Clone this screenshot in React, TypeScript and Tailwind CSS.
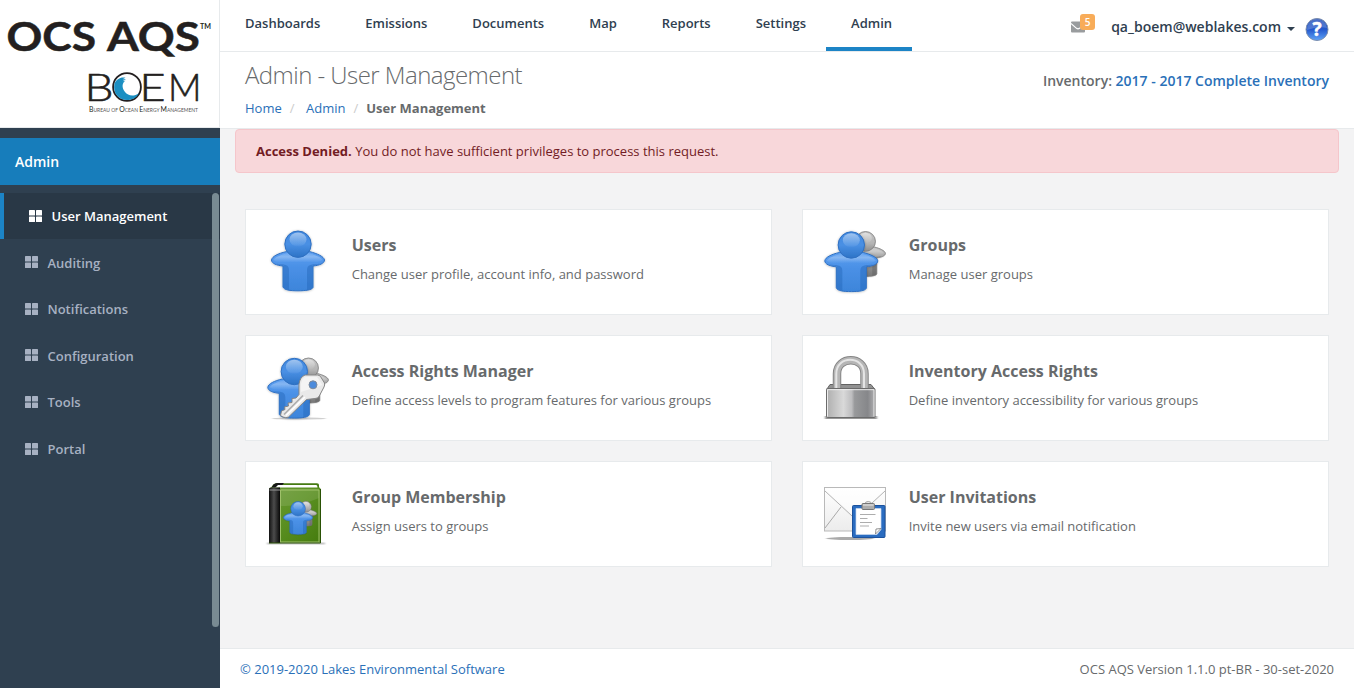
import React from "react";

const NAV = ["Dashboards", "Emissions", "Documents", "Map", "Reports", "Settings", "Admin"];
const SIDE = ["User Management", "Auditing", "Notifications", "Configuration", "Tools", "Portal"];

function Defs() {
  return (
    <svg width="0" height="0" className="absolute" aria-hidden="true">
      <defs>
        <linearGradient id="blueBody" x1="0" y1="0" x2="0" y2="1">
          <stop offset="0" stopColor="#5d9ff0" />
          <stop offset="0.4" stopColor="#4a90e6" />
          <stop offset="1" stopColor="#3d85da" />
        </linearGradient>
        <linearGradient id="shoulder" x1="0" y1="0" x2="0" y2="1">
          <stop offset="0" stopColor="#fff" stopOpacity="0.1" />
          <stop offset="0.4" stopColor="#fff" stopOpacity="0.28" />
          <stop offset="1" stopColor="#fff" stopOpacity="0" />
        </linearGradient>
        <linearGradient id="blueHead" x1="0" y1="0" x2="0" y2="1">
          <stop offset="0" stopColor="#4088df" />
          <stop offset="0.5" stopColor="#4a90e4" />
          <stop offset="1" stopColor="#2d73c6" />
        </linearGradient>
        <linearGradient id="headShine" x1="0" y1="0" x2="0" y2="1">
          <stop offset="0" stopColor="#fff" stopOpacity="0.5" />
          <stop offset="1" stopColor="#fff" stopOpacity="0.02" />
        </linearGradient>
        <linearGradient id="grayBody" x1="0" y1="0" x2="0" y2="1">
          <stop offset="0" stopColor="#c4c4c4" />
          <stop offset="0.4" stopColor="#a4a4a4" />
          <stop offset="1" stopColor="#767676" />
        </linearGradient>
        <linearGradient id="grayHead" x1="0" y1="0" x2="0" y2="1">
          <stop offset="0" stopColor="#c4c4c4" />
          <stop offset="0.6" stopColor="#b4b4b4" />
          <stop offset="1" stopColor="#8c8c8c" />
        </linearGradient>
        <linearGradient id="metal" x1="0" y1="0" x2="1" y2="0">
          <stop offset="0" stopColor="#aeaeae" />
          <stop offset="0.35" stopColor="#d9d9d9" />
          <stop offset="0.52" stopColor="#bdbdbf" />
          <stop offset="0.58" stopColor="#98999b" />
          <stop offset="0.85" stopColor="#86878a" />
          <stop offset="1" stopColor="#b0b0b2" />
        </linearGradient>
        <linearGradient id="greenCover" x1="0" y1="0" x2="1" y2="1">
          <stop offset="0" stopColor="#6a9a35" />
          <stop offset="0.45" stopColor="#5b9022" />
          <stop offset="1" stopColor="#457c0e" />
        </linearGradient>
        <linearGradient id="spine" x1="0" y1="0" x2="1" y2="0">
          <stop offset="0" stopColor="#111" />
          <stop offset="0.45" stopColor="#4c4c4c" />
          <stop offset="1" stopColor="#080808" />
        </linearGradient>
        <linearGradient id="paper" x1="0" y1="0" x2="0" y2="1">
          <stop offset="0" stopColor="#fff" />
          <stop offset="1" stopColor="#ececec" />
        </linearGradient>
        <linearGradient id="help" x1="0" y1="0" x2="0" y2="1">
          <stop offset="0" stopColor="#1c49b4" />
          <stop offset="0.5" stopColor="#2459cd" />
          <stop offset="1" stopColor="#5fa4f8" />
        </linearGradient>
        <filter id="soft" x="-20%" y="-20%" width="140%" height="150%">
          <feDropShadow dx="0" dy="0.3" stdDeviation="1" floodColor="#000" floodOpacity="0.3" />
        </filter>
        <filter id="floor" x="-20%" y="-100%" width="140%" height="300%">
          <feGaussianBlur stdDeviation="1.3 0.7" />
        </filter>
      </defs>
    </svg>
  );
}

const TORSO =
  "M5.500 30 C6 26.500 12 23.500 20 21.700 H44 C51 23.500 58 26.500 58.500 30 C58.500 33.500 53 35.500 47 36 V57.500 C46 60 39.500 60.800 32 60.800 C24 60.800 18 60 17 57 V36 C11 35.500 5.500 33.500 5.500 30 Z";

function Person({ gray = false }: { gray?: boolean }) {
  const edge = gray ? "#7c7c7c" : "#2f70c2";
  return (
    <g filter="url(#soft)">
      <path d={TORSO} fill={gray ? "url(#grayBody)" : "url(#blueBody)"} stroke={edge} strokeWidth="1" />
      <path
        d="M10 33.500 C16 35 23 33 23 40 V60 C20 59 17.500 58.300 17.500 57 V35.500 C14 35 12 34.500 10 33.500 Z M54 33.500 C48 35 41 33 41 40 V60 C44 59.500 46.500 58.500 46.500 57.500 V35.500 C50 35.200 52 34.500 54 33.500 Z"
        fill={gray ? "#606060" : "#2465b8"}
        opacity="0.45"
      />
      <path d="M7.500 30 C9 27 16 24.500 22 23 H42 C48 24.500 55 27 56.500 30 C50 34 44 32 32 32 C20 32 13 34 7.500 30 Z" fill="url(#shoulder)" />
      <circle cx="32" cy="14.200" r="13.200" fill={gray ? "url(#grayHead)" : "url(#blueHead)"} stroke={edge} strokeWidth="1" />
      <ellipse cx="32" cy="9.500" rx="8.500" ry="7" fill="url(#headShine)" />
    </g>
  );
}

function UsersIcon() {
  return (
    <svg viewBox="0 0 64 64" width="64" height="64" overflow="visible">
      <Person />
    </svg>
  );
}

function Pair() {
  return (
    <>
      <g transform="translate(18.500 .8) scale(.75)"><Person gray /></g>
      <g transform="translate(-3.700 .8)"><Person /></g>
    </>
  );
}

function GroupsIcon() {
  return <svg viewBox="0 0 64 64" width="64" height="64" overflow="visible"><Pair /></svg>;
}

function KeyIcon() {
  return (
    <svg viewBox="0 0 64 64" width="64" height="64" overflow="visible">
      <ellipse cx="33" cy="62.500" rx="27" ry="1" fill="#777" opacity=".35" filter="url(#floor)" />
      <g transform="translate(0 .5)"><Pair /></g>
      <path
        d="M39 19 L51.500 19 Q53 19 54.500 20.500 L58.500 27 Q59 29 58 31 L53 40.500 Q51.500 42.500 49 42.500 L40.500 43.500 L22.500 61 Q20 62.500 17 61 L14.500 59.500 L15.500 55 L19 53.500 L18.500 51 L22.500 50 L22 47 L26 46.500 L26 42.500 L30 42 L33 38.500 L33 28 Q34 21 39 19 Z"
        fill="#e9e9e9"
        stroke="#858585"
        strokeWidth="1"
      />
      <path d="M39.500 21 L51 21 L56.500 29 L35 36 L35 28 Q36 22 39.500 21Z" fill="#fff" opacity=".5" />
      <path d="M18 58.500 L37 39.500" stroke="#aaa" strokeWidth="1.500" />
      <path d="M20 59.500 L39 41" stroke="#fff" strokeWidth="1.500" />
      <circle cx="47" cy="28.800" r="4" fill="#4c8bdc" stroke="#7f8b9b" />
    </svg>
  );
}

function LockIcon() {
  return (
    <svg viewBox="0 0 64 64" width="64" height="64" overflow="visible">
      <g transform="translate(-2 0)">
        <rect x="4" y="60" width="52" height="3" fill="#333" opacity=".5" filter="url(#floor)" />
        <path d="M6 33 L9 28.500 H50 L53.500 33 Z" fill="#929292" stroke="#626262" />
        <path d="M16 32.500 V17.700 C16 -.2 43.500 -.2 43.500 17.700 V32.500" fill="none" stroke="#858585" strokeWidth="8.500" />
        <path d="M16 32.500 V17.700 C16 -.2 43.500 -.2 43.500 17.700 V32.500" fill="none" stroke="#b5b5b5" strokeWidth="6.500" />
        <path d="M15.300 32.500 V17.700 C15.300 -.8 43 -.8 43 17.700 V32.500" fill="none" stroke="#e4e4e4" strokeWidth="2" />
        <rect x="5.500" y="32.500" width="48.500" height="29" rx="1" fill="url(#metal)" stroke="#6b6b6b" />
        <path d="M6.500 60.500 V33.700 H53 V60.500" fill="none" stroke="#f3f3f3" strokeWidth="1" opacity=".9" />
      </g>
    </svg>
  );
}

function BookIcon() {
  return (
    <svg viewBox="0 0 64 64" width="64" height="64" overflow="visible">
      <g transform="translate(-2 0)">
        <rect x="3" y="60.500" width="58" height="2" fill="#777" opacity=".4" filter="url(#floor)" />
        <path d="M7 6 Q9 1.200 13 1.200 H53 Q55 1.200 55 3 V8 H8 Z" fill="#467b13" />
        <path d="M7 7 Q9 1 13 1 H20 L14 8 Z" fill="#171717" />
        <path d="M11 6 L14 3 H52 Q53.500 3 53.500 6 Z" fill="#fff" />
        <path d="M5 7 Q5 5.500 7 5.500 H55.500 Q56.500 5.500 56.500 7 V60.500 H5 Z" fill="url(#greenCover)" />
        <path d="M17 7 H55 V16 Q34 25 17 24 Z" fill="#fff" opacity=".11" />
        <path d="M5 7 Q5 5.500 7 5.500 H16 V61 H5 Z" fill="url(#spine)" />
        <path d="M16.500 8 H55 V60 H16.500 Z" fill="none" stroke="#9fc16a" strokeWidth="1" />
        <path d="M5.500 8 H16" stroke="#999" strokeWidth="1" />
        <path d="M5 61 H56.500 V7" fill="none" stroke="#295104" strokeWidth="1" />
        <g transform="translate(18.500 18.500) scale(.55)"><Pair /></g>
      </g>
    </svg>
  );
}

function MailIcon() {
  return (
    <svg viewBox="0 0 64 64" width="64" height="64" overflow="visible">
      <g transform="translate(-2 -2)">
        <ellipse cx="29" cy="58.500" rx="24" ry="1.500" fill="#444" opacity=".45" filter="url(#floor)" />
        <rect x="3.500" y="7.500" width="61" height="43.500" fill="url(#paper)" stroke="#b9b9b9" />
        <path d="M4 48 L20 27 M64 48 L48 27" stroke="#a9a9a9" fill="none" />
        <path d="M4 11 L31 36 Q34 38 37 36 L64 11" stroke="#b3b3b3" fill="none" />
        <path d="M4.500 8.500 H63.500 V10 L37 34.500 Q34 37 31 34.500 L4.500 10Z" fill="#fff" opacity=".6" />
        <rect x="31.500" y="25.500" width="32.500" height="32" rx="1" fill="#2a6cc0" stroke="#1c529d" />
        <path d="M35 28.500 H60 V49.500 L56 54.500 H35 Z" fill="#fff" stroke="#c9d9ee" strokeWidth=".7" />
        <path d="M54.500 54 L55 49 L60 48.500 Z" fill="#fff" stroke="#777" strokeWidth=".8" />
        <path d="M39 34.500 H54.500 M39 38.500 H46.500 M39 42.500 H51 M39 46 H48" stroke="#adadad" strokeWidth="1" />
        <path d="M44 24 Q44 21.500 47.200 21.500 Q50.500 21.500 50.500 24" fill="#eee" stroke="#a5a5a5" />
        <rect x="41" y="23.500" width="12.500" height="6" rx="1" fill="#adadad" stroke="#777" />
        <path d="M42 25 H52.500" stroke="#ececec" />
      </g>
    </svg>
  );
}

const CARDS = [
  { t: "Users", d: "Change user profile, account info, and password", I: UsersIcon },
  { t: "Groups", d: "Manage user groups", I: GroupsIcon },
  { t: "Access Rights Manager", d: "Define access levels to program features for various groups", I: KeyIcon },
  { t: "Inventory Access Rights", d: "Define inventory accessibility for various groups", I: LockIcon },
  { t: "Group Membership", d: "Assign users to groups", I: BookIcon },
  { t: "User Invitations", d: "Invite new users via email notification", I: MailIcon },
];

function Logo() {
  return (
    <svg width="219" height="127" viewBox="0 0 219 127" fill="#231f20" className="block">
      <g fontFamily="Lato" fontWeight="700" fontSize="40.500" stroke="#231f20" strokeWidth=".5">
        <text x="6.500" y="51" textLength="89.500" lengthAdjust="spacingAndGlyphs">OCS</text>
        <text x="107" y="51" textLength="93" lengthAdjust="spacingAndGlyphs">AQS</text>
      </g>
      <text x="200" y="28.500" fontFamily="Lato" fontWeight="700" fontSize="7.500" textLength="11" lengthAdjust="spacingAndGlyphs">TM</text>
      <g fontFamily="Lato" fontWeight="300" fontSize="38" stroke="#231f20" strokeWidth=".6">
        <text x="84.500" y="101" textLength="29" lengthAdjust="spacingAndGlyphs">B</text>
        <text x="139.500" y="101" textLength="26" lengthAdjust="spacingAndGlyphs">E</text>
        <text x="168" y="101" textLength="33.500" lengthAdjust="spacingAndGlyphs">M</text>
      </g>
      <circle cx="127" cy="87" r="13.900" fill="#fff" stroke="#231f20" strokeWidth="1.800" />
      <path
        d="M125.500 77.800 C121 76.500 116.500 79 114.500 83.500 C112.500 93 118.500 100 127 100 C132.500 100 137 97.500 139 93 C134 97 128 96 125 92 C121.500 87.500 122 82.500 125.500 80.700 L122.500 81.300 L126 79.200 L122.500 79.300 Z"
        fill="#1b8fc2"
      />
      <text x="89" y="111.500" textLength="109" lengthAdjust="spacingAndGlyphs" fontFamily="Lato" fontWeight="400" fontSize="5.200" fill="#555">
        <tspan fontSize="7.200" fill="#231f20">B</tspan>UREAU OF <tspan fontSize="7.200" fill="#231f20">O</tspan>CEAN <tspan fontSize="7.200" fill="#231f20">E</tspan>NERGY <tspan fontSize="7.200" fill="#231f20">M</tspan>ANAGEMENT
      </text>
    </svg>
  );
}

function GridIcon() {
  return (
    <svg width="13" height="12" viewBox="0 0 13 12" fill="currentColor" className="shrink-0">
      <rect width="6" height="5.500" rx=".6" />
      <rect x="7" width="6" height="5.500" rx=".6" />
      <rect y="6.500" width="6" height="5.500" rx=".6" />
      <rect x="7" y="6.500" width="6" height="5.500" rx=".6" />
    </svg>
  );
}

export default function App() {
  return (
    <div className="flex h-[688px] w-[1354px] overflow-hidden bg-[#f3f3f4] font-['Open_Sans',sans-serif] text-[13px] text-[#676a6c]">
      <Defs />
      <aside className="flex w-[220px] shrink-0 flex-col bg-[#2f4050]">
        <div className="h-32 border-r border-b border-[#e7eaec] bg-white"><Logo /></div>
        <div className="mt-2.5 flex h-[47px] items-center bg-[#177dbb] pl-[15px] text-sm font-semibold text-white">Admin</div>
        <div className="relative mt-2">
          <ul>
            {SIDE.map((s, i) => (
              <li
                key={s}
                className={
                  i === 0
                    ? "flex h-[46px] items-center gap-[9.5px] border-l-4 border-[#1c84c6] bg-[#293846] pl-[25px] font-semibold text-white"
                    : "flex h-[46.57px] items-center gap-[9.5px] pl-[25px] font-semibold text-[#a7b1c2]"
                }
              >
                <GridIcon />
                <span className={i % 2 === 1 ? "pt-[2px]" : "pt-[1px]"}>{s}</span>
              </li>
            ))}
          </ul>
          <div className="absolute top-0 right-px h-[434px] w-[7px] rounded-full bg-[#798b93]" />
        </div>
      </aside>
      <div className="flex min-w-0 grow flex-col">
        <header className="flex h-[52px] shrink-0 justify-between border-b border-[#e7eaec] bg-white">
          <nav className="flex">
            {NAV.map((n) => (
              <a
                key={n}
                className={
                  n === "Admin"
                    ? "-mb-px h-[51px] border-b-4 border-[#1c84c6] pt-3.5 pr-5 pl-[25px] leading-[19px] font-semibold text-[#2f4050]"
                    : "pt-3.5 pr-5 pl-[25px] leading-[19px] font-semibold text-[#2f4050]"
                }
              >
                {n}
              </a>
            ))}
          </nav>
          <div className="flex pr-[25px] text-[#2f4050]">
            <div className="relative mt-[21px] mr-[26px] h-3 w-3.5">
              <svg width="14" height="12" viewBox="0 0 14 12" className="block">
                <rect y=".5" width="14" height="11" rx="1" fill="#999c9e" />
                <path d="M0 2.500 L5.500 7.300 Q7 8.500 8.500 7.300 L14 2.500" fill="none" stroke="#fff" strokeWidth="1.100" />
              </svg>
              <span className="absolute -top-[7px] left-[9px] flex h-4 w-[15px] items-center justify-center rounded-[3px] bg-[#f8ac59] text-[10px] font-semibold text-white">5</span>
            </div>
            <span className="pt-[17px] text-sm leading-5 font-semibold">qa_boem@weblakes.com</span>
            <svg width="8" height="4" viewBox="0 0 8 4" className="mt-[27px] ml-1.5"><path d="M0 0 H8 L4 4Z" fill="#2f4050" /></svg>
            <svg width="24" height="24" viewBox="0 0 24 24" className="mt-[17px] ml-2.5">
              <circle cx="12" cy="12.500" r="11" fill="url(#help)" stroke="#7d8fae" strokeWidth="1" />
              <path d="M2 13 A10 10 0 0 1 22 11 Q13 9 2 13Z" fill="#fff" opacity=".2" />
              <text x="12" y="19" textAnchor="middle" fontFamily="Open Sans" fontWeight="700" fontSize="19" fill="#fff" stroke="#fff" strokeWidth=".5">?</text>
            </svg>
          </div>
        </header>
        <section className="flex h-[77px] shrink-0 justify-between border-b border-[#e7eaec] bg-white px-[25px]">
          <div>
            <h1 className="mt-2 text-2xl leading-[30px] font-light tracking-[-0.54px]">Admin - User Management</h1>
            <div className="mt-[9px] flex leading-[19px]">
              <a className="text-[#2a70b8]">Home</a>
              <span className="mr-[11.5px] ml-2 text-[#ccc]">/</span>
              <a className="text-[#2a70b8]">Admin</a>
              <span className="mx-2 text-[#ccc]">/</span>
              <strong>User Management</strong>
            </div>
          </div>
          <div className="mt-[19px] text-sm leading-5 font-semibold">
            Inventory: <span className="text-[#2a70b8]">2017 - 2017 Complete Inventory</span>
          </div>
        </section>
        <main className="grow px-[15px]">
          <div className="h-11 rounded border border-[#f5c6cb] bg-[#f8d7da] pl-5 leading-[43px] text-[#721c24]">
            <b>Access Denied.</b> You do not have sufficient privileges to process this request.
          </div>
          <div className="mt-9 grid grid-cols-2 gap-x-[30px] gap-y-5 px-2.5">
            {CARDS.map(({ t, d, I }) => (
              <div key={t} className="flex h-[106px] border border-[#e7eaec] bg-white pt-5 pl-5">
                <I />
                <div className="ml-[21.7px]">
                  <h3 className="mt-1 text-base leading-[22px] font-bold">{t}</h3>
                  <p className="mt-[9px] leading-[18px]">{d}</p>
                </div>
              </div>
            ))}
          </div>
        </main>
        <footer className="flex h-10 shrink-0 items-center justify-between border-t border-[#e7eaec] bg-white px-5 pt-0.5">
          <a className="text-[#2a70b8]">© 2019-2020 Lakes Environmental Software</a>
          <span>OCS AQS Version 1.1.0 pt-BR - 30-set-2020</span>
        </footer>
      </div>
    </div>
  );
}
